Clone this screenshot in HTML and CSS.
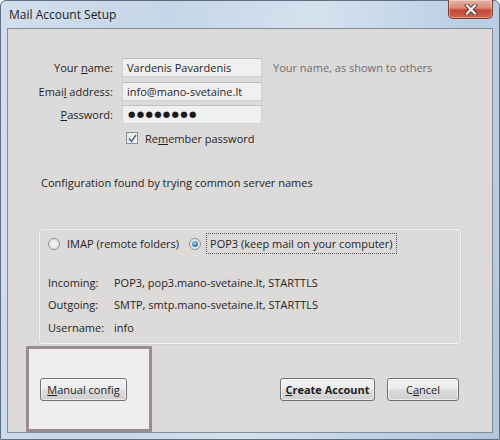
FILE: index.html
```html
<!DOCTYPE html>
<html>
<head>
<meta charset="utf-8">
<link rel="stylesheet" href="styles.css">
</head>
<body>
<div class="window">
  <div class="titlebar">
    <span class="title">Mail Account Setup</span>
    <div class="close">
      <svg width="16" height="11" viewBox="0 0 16 11">
        <path d="M4 1.5 L12 9.5 M12 1.5 L4 9.5" stroke="#5a3a36" stroke-width="4" stroke-linecap="square"/>
        <path d="M4 1.5 L12 9.5 M12 1.5 L4 9.5" stroke="#f4f4f4" stroke-width="2.2" stroke-linecap="square"/>
      </svg>
    </div>
  </div>
  <div class="client">
    <div class="form">
      <label class="lbl">Your <u>n</u>ame:</label>
      <div class="input">Vardenis Pavardenis</div>
      <span class="hint">Your name, as shown to others</span>

      <label class="lbl">Emai<u>l</u> address:</label>
      <div class="input">info@mano-svetaine.lt</div>
      <span></span>

      <label class="lbl"><u>P</u>assword:</label>
      <div class="input dots">●●●●●●●●</div>
      <span></span>

      <span></span>
      <div class="check-row">
        <span class="checkbox">
          <svg width="9" height="9" viewBox="0 0 9 9"><path d="M1 4.5 L3.5 7.5 L8 1" fill="none" stroke="#4a6a9a" stroke-width="1.6"/></svg>
        </span>
        <span>Re<u>m</u>ember password</span>
      </div>
      <span></span>
    </div>

    <p class="status">Configuration found by trying common server names</p>

    <div class="group">
      <div class="radios">
        <label class="radio-item"><span class="radio"></span>IMAP (remote folders)</label>
        <label class="radio-item"><span class="radio on"></span><span class="focus">POP3 (keep mail on your computer)</span></label>
      </div>
      <div class="details">
        <span class="dk">Incoming:</span><span>POP3, pop3.mano-svetaine.lt, STARTTLS</span>
        <span class="dk">Outgoing:</span><span>SMTP, smtp.mano-svetaine.lt, STARTTLS</span>
        <span class="dk">Username:</span><span>info</span>
      </div>
    </div>

    <div class="footer">
      <div class="highlight">
        <button class="btn manual"><u>M</u>anual config</button>
      </div>
      <div class="actions">
        <button class="btn create"><u>C</u>reate Account</button>
        <button class="btn cancel">C<u>a</u>ncel</button>
      </div>
    </div>
  </div>
</div>
</body>
</html>
```

FILE: styles.css
```css
* { box-sizing: border-box; }
html, body { margin: 0; padding: 0; }
body {
  width: 500px;
  height: 440px;
  overflow: hidden;
  font-family: "Open Sans", "Noto Sans", sans-serif;
  font-size: 11px;
  color: #1f1f1f;
  background: #ffffff;
}
.window {
  width: 500px;
  height: 440px;
  display: flex;
  flex-direction: column;
  border: 1px solid #5f6e80;
  border-radius: 6px 6px 0 0;
  background: linear-gradient(100deg, #d2dfec 0%, #c5d6e8 30%, #d5e2ee 55%, #bcd0e5 80%, #b2c8e0 100%);
}
.titlebar {
  height: 27px;
  display: flex;
  align-items: flex-start;
  padding-left: 8px;
  flex-shrink: 0;
}
.title {
  font-size: 12px;
  line-height: 14px;
  margin-top: 7px;
  color: #1e1e1e;
}
.close {
  margin-left: auto;
  margin-right: 6px;
  margin-top: -1px;
  width: 45px;
  height: 19px;
  border: 1px solid #7a3a32;
  border-top: none;
  border-radius: 0 0 5px 5px;
  background: linear-gradient(#e8b2a6 0%, #d88a7a 45%, #c5493a 55%, #d0644f 100%);
  display: flex;
  align-items: center;
  justify-content: center;
  box-shadow: inset 0 0 0 1px rgba(255,255,255,0.35);
}
.client {
  flex: 1;
  margin: 0 6px 6px 6px;
  border: 1px solid #868c93;
  background: #dddada;
  display: flex;
  flex-direction: column;
}
.form {
  display: grid;
  grid-template-columns: 105px 140px auto;
  column-gap: 9px;
  row-gap: 4.5px;
  padding-top: 29px;
  align-items: center;
}
.form .hint { margin-left: 2px; }
.lbl {
  text-align: right;
  white-space: nowrap;
}
.input {
  height: 19px;
  line-height: 17px;
  padding: 0 4px;
  background: #f1f0f0;
  border: 1px solid #d2d0d0;
  border-top-color: #c2c0c0;
  white-space: nowrap;
  overflow: hidden;
}
.input.dots {
  font-family: "DejaVu Sans", sans-serif;
  font-size: 8.5px;
  letter-spacing: 1.3px;
  line-height: 17px;
  padding-left: 5px;
  color: #1a1a1a;
}
.hint { color: #6f6d6d; white-space: nowrap; }
.check-row {
  display: flex;
  align-items: center;
  gap: 7px;
  padding-left: 4px;
  margin-top: 2px;
  white-space: nowrap;
}
.checkbox {
  width: 12px;
  height: 12px;
  border: 1px solid #8e8f8f;
  background: linear-gradient(135deg, #e4e4e4, #f8f8f8);
  display: flex;
  align-items: center;
  justify-content: center;
}
.status {
  margin: 29px 0 0 33px;
  line-height: 15px;
}
.group {
  margin: 39px 31px 0 31px;
  height: 115px;
  border: 1px solid #f2f2f2;
  border-radius: 3px;
  box-shadow: 0 0 0 1px #d4d2d2;
  padding: 2px 0 0 8px;
}
.radios {
  display: flex;
  align-items: center;
  height: 22px;
  margin-top: 1px;
}
.radio-item {
  display: flex;
  align-items: center;
  white-space: nowrap;
}
.radio-item + .radio-item { margin-left: 10px; }
.radio {
  width: 12px;
  height: 12px;
  border-radius: 50%;
  border: 1px solid #909292;
  background: radial-gradient(circle, #f6f6f6 0%, #dcdcdc 100%);
  margin-right: 7px;
  position: relative;
}
.radio.on::after {
  content: "";
  position: absolute;
  left: 2px;
  top: 2px;
  width: 6px;
  height: 6px;
  border-radius: 50%;
  background: radial-gradient(circle at 40% 35%, #9fd3f2 0%, #2a7fc0 60%, #1a5a94 100%);
}
.focus {
  border: 1px dotted #555;
  padding: 2px 3px;
  margin-left: -2px;
}
.details {
  display: grid;
  grid-template-columns: 66px auto;
  row-gap: 7.5px;
  margin-top: 20px;
  line-height: 15px;
}
.footer {
  display: flex;
  flex: 1;
  margin-top: 2px;
}
.highlight {
  margin-left: 18px;
  width: 126px;
  border: 3px solid #9a8c90;
  background: #efeeee;
  padding: 29px 0 0 11px;
}
.btn {
  font-family: inherit;
  font-size: 11px;
  color: #1f1f1f;
  height: 23px;
  padding: 0;
  border: 1px solid #707070;
  border-radius: 3px;
  background: linear-gradient(#f2f2f2 0%, #ebebeb 48%, #dddddd 52%, #cfcfcf 100%);
  box-shadow: inset 0 0 0 1px rgba(255,255,255,0.6);
}
.manual { width: 87px; }
.actions {
  margin-left: auto;
  margin-right: 33px;
  margin-top: 32px;
  display: flex;
  gap: 12px;
  align-items: flex-start;
}
.create { width: 95px; font-weight: bold; }
.cancel { width: 72px; }
```
